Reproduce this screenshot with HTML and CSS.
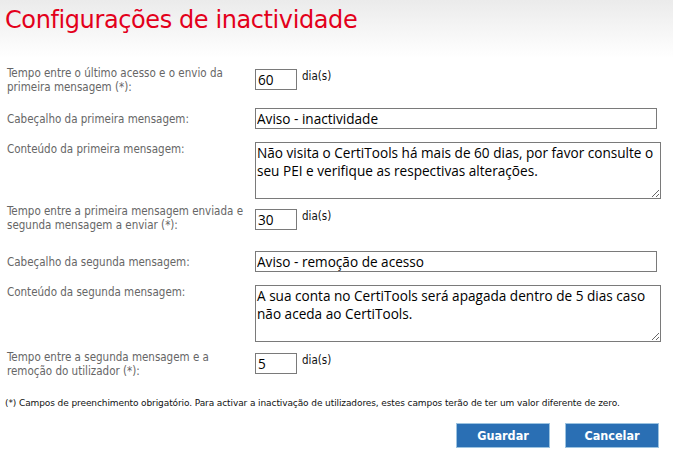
FILE: index.html
```html
<!DOCTYPE html>
<html lang="pt">
<head>
<meta charset="utf-8">
<title>Configurações de inactividade</title>
<link rel="stylesheet" href="styles.css">
</head>
<body>
<div class="page">
  <h1 class="title">Configurações de inactividade</h1>
  <form class="form">
    <div class="row row-num row-first">
      <label class="lbl">Tempo entre o último acesso e o envio da primeira mensagem (*):</label>
      <div class="field"><input class="num" type="text" value="60"><span class="unit">dia(s)</span></div>
    </div>
    <div class="row row-text gap14">
      <label class="lbl">Cabeçalho da primeira mensagem:</label>
      <div class="field"><input class="txt" type="text" value="Aviso - inactividade"></div>
    </div>
    <div class="row row-area gap13">
      <label class="lbl">Conteúdo da primeira mensagem:</label>
      <div class="field"><textarea class="area">Não visita o CertiTools há mais de 60 dias, por favor consulte o seu PEI e verifique as respectivas alterações.</textarea></div>
    </div>
    <div class="row row-num gap6">
      <label class="lbl">Tempo entre a primeira mensagem enviada e segunda mensagem a enviar (*):</label>
      <div class="field"><input class="num" type="text" value="30"><span class="unit">dia(s)</span></div>
    </div>
    <div class="row row-text gap19">
      <label class="lbl">Cabeçalho da segunda mensagem:</label>
      <div class="field"><input class="txt" type="text" value="Aviso - remoção de acesso"></div>
    </div>
    <div class="row row-area gap13">
      <label class="lbl">Conteúdo da segunda mensagem:</label>
      <div class="field"><textarea class="area">A sua conta no CertiTools será apagada dentro de 5 dias caso
não aceda ao CertiTools.</textarea></div>
    </div>
    <div class="row row-num gap8">
      <label class="lbl">Tempo entre a segunda mensagem e a remoção do utilizador (*):</label>
      <div class="field"><input class="num" type="text" value="5"><span class="unit">dia(s)</span></div>
    </div>
    <p class="note">(*) Campos de preenchimento obrigatório. Para activar a inactivação de utilizadores, estes campos terão de ter um valor diferente de zero.</p>
    <div class="actions">
      <button type="button" class="btn">Guardar</button>
      <button type="button" class="btn">Cancelar</button>
    </div>
  </form>
</div>
</body>
</html>
```
FILE: styles.css
```css
html, body {
  margin: 0;
  padding: 0;
  background: #fff;
}
body {
  font-family: "DejaVu Sans Condensed", "DejaVu Sans", Verdana, sans-serif;
  width: 673px;
  height: 460px;
  overflow: hidden;
}
.page {
  background: linear-gradient(to bottom, #ebebeb 0px, #ffffff 58px, #ffffff 100%);
  min-height: 460px;
}
.title {
  margin: 0;
  padding: 5px 0 0 5px;
  height: 62px;
  box-sizing: border-box;
  font-family: "DejaVu Sans", Verdana, sans-serif;
  font-weight: normal;
  font-size: 24px;
  line-height: 30px;
  color: #e3001b;
  letter-spacing: -0.4px;
}
.form {
  margin: 0;
  padding: 0;
}
.row {
  display: flex;
  align-items: center;
}
.row-area {
  align-items: flex-start;
}
.row-first { margin-top: 4px; }
.gap14 { margin-top: 14px; }
.gap13 { margin-top: 13px; }
.gap6 { margin-top: 5px; }
.gap19 { margin-top: 19px; }
.gap8 { margin-top: 8px; }
.lbl {
  width: 255px;
  padding-left: 7px;
  padding-right: 2px;
  box-sizing: border-box;
  flex: none;
  font-size: 11.5px;
  line-height: 14px;
  color: #666;
}
.field {
  display: flex;
  align-items: flex-start;
}
.row-num .field {
  margin-top: -2px;
}
.gap6 .field {
  margin-top: 3px;
}
input, textarea {
  font-family: "Open Sans", "Noto Sans", sans-serif;
  font-size: 13.6px;
  color: #000;
  border: 1px solid #7a7a7a;
  margin: 0;
  box-sizing: border-box;
  background: #fff;
  outline: none;
}
.num {
  width: 42px;
  height: 21px;
  padding: 0 2px;
}
.unit {
  margin-left: 5px;
  font-size: 11.5px;
  line-height: 14px;
  color: #111;
}
.txt {
  width: 402px;
  height: 21px;
  padding: 0 1px;
}
.area {
  display: block;
  width: 406px;
  height: 57px;
  padding: 1px 1px;
  line-height: 18px;
  resize: both;
  overflow: hidden;
}
.note {
  margin: 18px 0 0 5px;
  font-family: "DejaVu Sans", Verdana, sans-serif;
  font-size: 9px;
  line-height: 14px;
  color: #111;
  letter-spacing: -0.1px;
}
.actions {
  display: flex;
  justify-content: flex-end;
  gap: 15px;
  margin-top: 13px;
  padding-right: 14px;
}
.btn {
  width: 94px;
  height: 25px;
  background: #2a6fb4;
  border: 1px solid #9cc3e0;
  color: #fff;
  font-family: "DejaVu Sans Condensed", "DejaVu Sans", sans-serif;
  font-weight: bold;
  font-size: 12.5px;
  padding: 0;
}
```
